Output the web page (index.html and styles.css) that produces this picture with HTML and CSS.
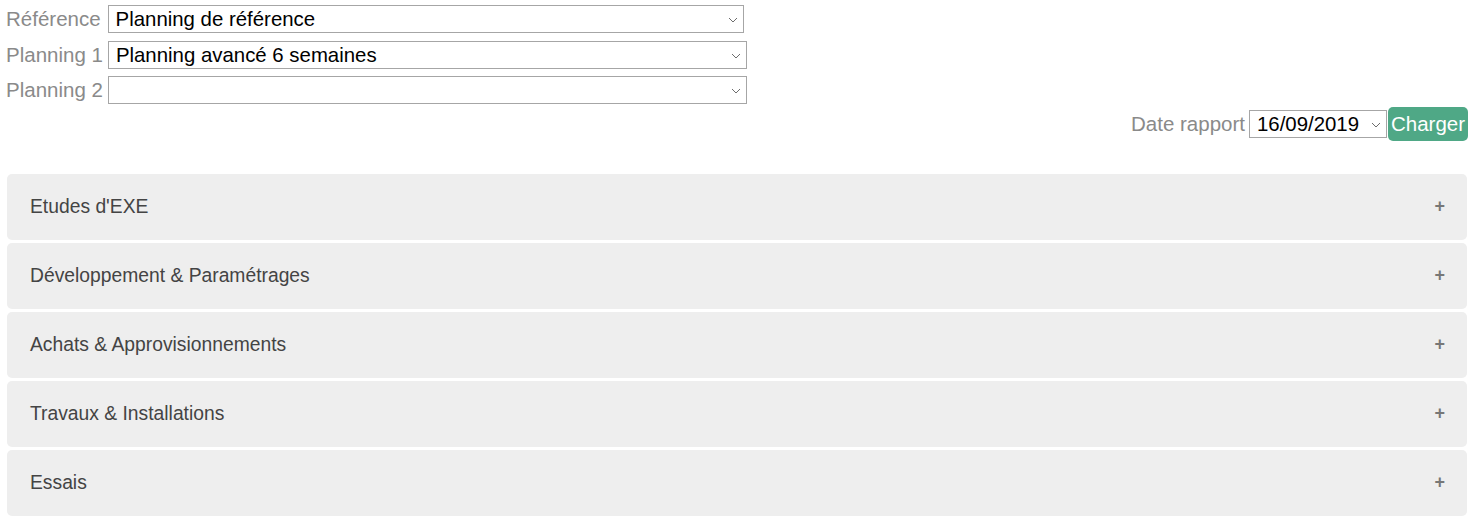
FILE: index.html
```html
<!DOCTYPE html>
<html lang="fr">
<head>
<meta charset="utf-8">
<title>Rapport planning</title>
<link rel="stylesheet" href="styles.css">
</head>
<body>
<div class="page">
  <form class="filters">
    <div class="row">
      <label class="lbl">Référence</label>
      <div class="sel-wrap w1">
        <select class="sel"><option>Planning de référence</option></select>
        <svg class="chev" width="10" height="6" viewBox="0 0 10 6"><path d="M1 1 L5 5 L9 1" fill="none" stroke="#6d6d6d" stroke-width="1"/></svg>
      </div>
    </div>
    <div class="row">
      <label class="lbl">Planning 1</label>
      <div class="sel-wrap w2">
        <select class="sel"><option>Planning avancé 6 semaines</option></select>
        <svg class="chev" width="10" height="6" viewBox="0 0 10 6"><path d="M1 1 L5 5 L9 1" fill="none" stroke="#6d6d6d" stroke-width="1"/></svg>
      </div>
    </div>
    <div class="row">
      <label class="lbl">Planning 2</label>
      <div class="sel-wrap w2">
        <select class="sel"><option></option></select>
        <svg class="chev" width="10" height="6" viewBox="0 0 10 6"><path d="M1 1 L5 5 L9 1" fill="none" stroke="#6d6d6d" stroke-width="1"/></svg>
      </div>
    </div>
    <div class="row right">
      <label class="lbl">Date rapport</label>
      <div class="sel-wrap w3">
        <select class="sel"><option>16/09/2019</option></select>
        <svg class="chev" width="10" height="6" viewBox="0 0 10 6"><path d="M1 1 L5 5 L9 1" fill="none" stroke="#6d6d6d" stroke-width="1"/></svg>
      </div>
      <button type="button" class="btn">Charger</button>
    </div>
  </form>

  <div class="accordion">
    <div class="panel"><span>Etudes d'EXE</span><span class="plus">+</span></div>
    <div class="panel"><span>Développement &amp; Paramétrages</span><span class="plus">+</span></div>
    <div class="panel"><span>Achats &amp; Approvisionnements</span><span class="plus">+</span></div>
    <div class="panel"><span>Travaux &amp; Installations</span><span class="plus">+</span></div>
    <div class="panel"><span>Essais</span><span class="plus">+</span></div>
  </div>
</div>
</body>
</html>
```
FILE: styles.css
```css
* { box-sizing: border-box; }
html, body { margin: 0; padding: 0; background: #fff; }
body { font-family: "Liberation Sans", Arial, sans-serif; }

.page { padding: 5px 3px 0 6px; }

.filters { display: flex; flex-direction: column; }
.row { display: flex; align-items: center; gap: 5px; height: 28px; margin-bottom: 7.5px; }
.row.right { justify-content: flex-end; gap: 4px; height: 34px; margin-top: -5px; margin-bottom: 0; }
.row.right .btn { margin-left: -3px; }

.lbl { font-size: 20.5px; color: #8a8a8a; white-space: nowrap; }

.sel-wrap { position: relative; height: 28px; }
.sel-wrap.w1 { width: 636px; margin-left: 2px; }
.sel-wrap.w2 { width: 639px; }
.sel-wrap.w3 { width: 138px; }

.sel {
  appearance: none;
  -webkit-appearance: none;
  width: 100%;
  height: 28px;
  border: 1px solid #a6a6a6;
  border-radius: 0;
  background: #fff;
  font-family: "Liberation Sans", Arial, sans-serif;
  font-size: 20.4px;
  color: #000;
  padding: 0 20px 0 7px;
  margin: 0;
}
.chev { position: absolute; right: 6px; top: 12px; pointer-events: none; }

.btn {
  height: 34px;
  width: 80px;
  border: none;
  border-radius: 5px;
  background: #4fa886;
  color: #fff;
  font-family: "Liberation Sans", Arial, sans-serif;
  font-size: 20.5px;
  padding: 0;
}

.accordion { display: flex; flex-direction: column; gap: 3px; margin-top: 33px; margin-left: 1px; width: 1460px; }
.panel {
  height: 66px;
  background: #eeeeee;
  border-radius: 5px;
  display: flex;
  align-items: center;
  justify-content: space-between;
  padding: 0 22px 0 23px;
  font-size: 19.3px;
  color: #444;
}
.plus { font-size: 18px; font-weight: bold; color: #777; }
```
